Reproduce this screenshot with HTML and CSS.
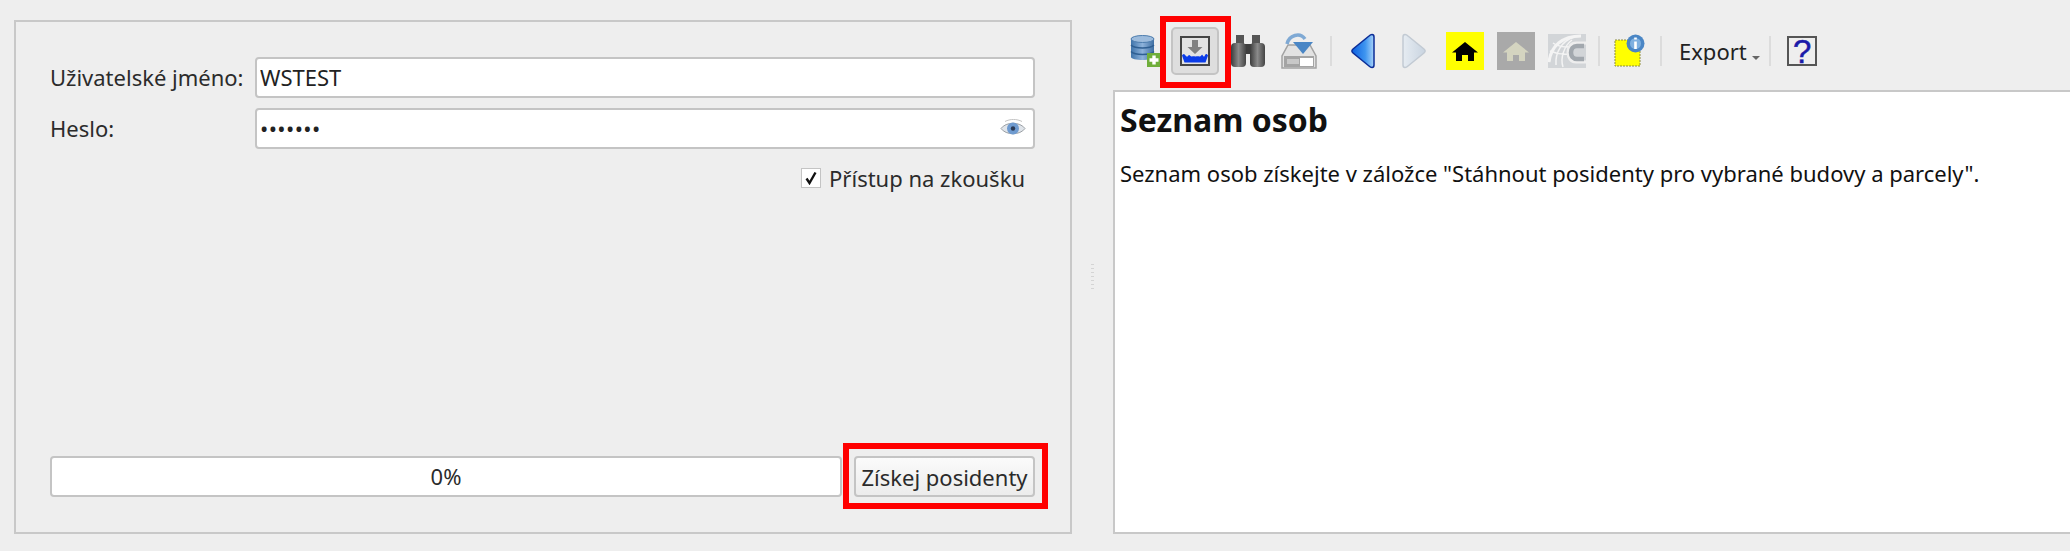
FILE: index.html
```html
<!doctype html>
<html lang="cs">

<head>
    <meta charset="utf-8">
    <title>Seznam osob</title>
    <link rel="stylesheet" href="styles.css">
</head>

<body>
    <div class="okno">
        <section class="panel">
            <div class="radek">
                <label class="popis">Uživatelské jméno:</label>
                <input class="pole" type="text" value="WSTEST">
            </div>
            <div class="radek">
                <label class="popis">Heslo:</label>
                <div class="heslo">
                    <input class="pole" type="password" value="1234567">
                    <svg class="oko" width="26" height="18" viewBox="0 0 26 18">
                        <path d="M1 9.500C6 2.500 20 2.500 25 9.500C20 16.500 6 16.500 1 9.500Z" fill="#dfe4ea" stroke="#9a9fa4"/>
                        <path d="M5 2.500C10 -.2 17 -.2 22 2.500" fill="none" stroke="#c4c4c4"/>
                        <circle cx="13" cy="9.500" r="6" fill="#6f9bd0"/>
                        <circle cx="13" cy="9.500" r="2.200" fill="#2b3a55"/>
                    </svg>
                </div>
            </div>
            <div class="zkouska">
                <span class="check">
                    <svg width="14" height="14" viewBox="0 0 14 14">
                        <path d="M2.500 7.500L5.500 12L11.500 1.500" fill="none" stroke="#111" stroke-width="2.400"/>
                    </svg>
                </span>
                <span>Přístup na zkoušku</span>
            </div>
            <div class="spodek">
                <div class="progress">0%</div>
                <div class="akce">
                    <button class="tlacitko">Získej posidenty</button>
                    <span class="ramecek"></span>
                </div>
            </div>
        </section>

        <div class="splitter"><span class="tecky"></span></div>

        <section class="prava">
            <div class="toolbar">
                <span class="tool">
                    <svg width="32" height="34" viewBox="0 0 32 34">
                        <defs>
                            <linearGradient id="db" x1="0" x2="1" y1="0" y2="0">
                                <stop offset="0" stop-color="#3f74ab"/>
                                <stop offset=".5" stop-color="#8db2da"/>
                                <stop offset="1" stop-color="#3f6fa3"/>
                            </linearGradient>
                        </defs>
                        <path d="M1 5C1 1 24 1 24 5V23C24 27 1 27 1 23Z" fill="url(#db)"/>
                        <ellipse cx="12.500" cy="5" rx="11.500" ry="3.500" fill="#9cbbdc" stroke="#4d7dae"/>
                        <path d="M1 11C5 15 20 15 24 11M1 17.500C5 21.500 20 21.500 24 17.500" fill="none" stroke="#2f5f92" stroke-width="1.500"/>
                        <rect x="17" y="19" width="14" height="14" fill="#6fae3a"/>
                        <path d="M24 21.500V30.500M19.500 26H28.500" stroke="#fff" stroke-width="3.400"/>
                    </svg>
                </span>
                <span class="tool aktivni">
                    <span class="tool-btn">
                        <svg width="30" height="30" viewBox="0 0 30 30">
                            <rect x="1" y="1" width="28" height="28" fill="#e2e2e2" stroke="#444" stroke-width="2"/>
                            <path d="M12 4H18V11H22.500L15 18L7.500 11H12Z" fill="#808080"/>
                            <path d="M2 19.500C3 17.500 4.500 17.500 5.500 19.500C6.500 21 7.500 21 8.500 19.500C9.500 18 10.500 21 12 20.500C13.500 20 14 20.500 15.500 20.500C17 20.500 18 20 19.500 20.500C21 21 21.500 18 22.500 19C23.500 21 24.500 21 25 19C26 17.500 27 17.500 28 19.500L25.500 26.500H4.500Z" fill="#0a3be8"/>
                        </svg>
                    </span>
                    <span class="ramecek"></span>
                </span>
                <span class="tool">
                    <svg width="36" height="34" viewBox="0 0 36 34">
                        <defs>
                            <linearGradient id="dal" x1="0" x2="1" y1="0" y2="0">
                                <stop offset="0" stop-color="#3c3c3c"/>
                                <stop offset=".5" stop-color="#8a8a8a"/>
                                <stop offset="1" stop-color="#444"/>
                            </linearGradient>
                        </defs>
                        <rect x="6" y="1" width="8" height="9" fill="#555"/>
                        <rect x="22" y="1" width="8" height="9" fill="#555"/>
                        <rect x="13" y="10" width="10" height="10" fill="#3e3e3e"/>
                        <rect x="1" y="9" width="15" height="24" rx="4" fill="url(#dal)"/>
                        <rect x="20" y="9" width="15" height="24" rx="4" fill="url(#dal)"/>
                    </svg>
                </span>
                <span class="tool">
                    <svg width="36" height="36" viewBox="0 0 36 36">
                        <path d="M7 12H29L35 23V35H1V23Z" fill="#e2e2e2" stroke="#a2a2a2" stroke-width="1.500"/>
                        <rect x="3" y="23" width="30" height="11" fill="#a4a4a4"/>
                        <rect x="6" y="26" width="12" height="5" fill="#c8c8c8"/>
                        <rect x="19" y="25" width="13" height="8" fill="#fff"/>
                        <path d="M6 11C8 2 19 -1 24 6" fill="none" stroke="#7fa9d4" stroke-width="3.500"/>
                        <path d="M12 9H32L22 21Z" fill="#4a86c5"/>
                    </svg>
                </span>
                <span class="oddelovac"></span>
                <span class="tool">
                    <svg width="24" height="36" viewBox="0 0 24 36">
                        <defs>
                            <linearGradient id="vlevo" x1="0" x2="1" y1="0" y2="0">
                                <stop offset="0" stop-color="#0c5fe0"/>
                                <stop offset=".6" stop-color="#3e95f0"/>
                                <stop offset="1" stop-color="#a9d3f8"/>
                            </linearGradient>
                        </defs>
                        <path d="M21 1.500C22.500 1.500 23 2.500 23 4V32C23 33.500 22.500 34.500 21 34.500C20 34.500 19 34 18 33L2 20C.5 18.800 .5 17.200 2 16L18 3C19 2 20 1.500 21 1.500Z" fill="url(#vlevo)" stroke="#0b2c96" stroke-width="1.500"/>
                    </svg>
                </span>
                <span class="tool">
                    <svg width="24" height="36" viewBox="0 0 24 36">
                        <defs>
                            <linearGradient id="vpravo" x1="0" x2="1" y1="0" y2="0">
                                <stop offset="0" stop-color="#e6ecf2"/>
                                <stop offset="1" stop-color="#c9d4e0"/>
                            </linearGradient>
                        </defs>
                        <path d="M3 1.500C1.500 1.500 1 2.500 1 4V32C1 33.500 1.500 34.500 3 34.500C4 34.500 5 34 6 33L22 20C23.500 18.800 23.500 17.200 22 16L6 3C5 2 4 1.500 3 1.500Z" fill="url(#vpravo)" stroke="#c2cad3" stroke-width="1.500"/>
                    </svg>
                </span>
                <span class="tool">
                    <svg width="38" height="38" viewBox="0 0 38 38">
                        <rect width="38" height="38" fill="#ffff00"/>
                        <path d="M19 10L32 20.500H28V29H22V23H16V29H10V20.500H6Z" fill="#000"/>
                    </svg>
                </span>
                <span class="tool">
                    <svg width="38" height="38" viewBox="0 0 38 38">
                        <rect width="38" height="38" fill="#a9a9a9"/>
                        <path d="M19 10L32 20.500H28V29H22V23H16V29H10V20.500H6Z" fill="#d4d4c0"/>
                    </svg>
                </span>
                <span class="tool">
                    <svg width="38" height="34" viewBox="0 0 38 34">
                        <rect width="38" height="34" fill="#d2d5d8"/>
                        <path d="M1 28C3 12 14 2 33 2" fill="none" stroke="#f4f4f4" stroke-width="3"/>
                        <path d="M8 31C7 18 14 7 26 3M15 33C12 24 16 12 24 6M2 17C9 20 15 21 22 20M5 9C11 13 17 14 25 12" fill="none" stroke="#f4f4f4" stroke-width="1.500"/>
                        <path d="M38 9H28C23 9 20 13 20 18C20 24 23 28 28 28H38" fill="none" stroke="#eeeeee" stroke-width="3"/>
                        <path d="M36 12H29C25 12 23 15 23 18.500C23 22 25 25 29 25H36" fill="none" stroke="#a2a8ae" stroke-width="4.500"/>
                    </svg>
                </span>
                <span class="oddelovac"></span>
                <span class="tool uzky">
                    <svg width="32" height="34" viewBox="0 0 32 34">
                        <rect x="1" y="6" width="25" height="26" fill="#ffff00" stroke="#8d8d3c" stroke-dasharray="2 1"/>
                        <circle cx="21.500" cy="9.500" r="9" fill="#4a86c5"/>
                        <circle cx="21.500" cy="9.500" r="5.500" fill="#7fb0e0"/>
                        <path d="M21.500 3.500V5.500M21.500 7.500V15" stroke="#fff" stroke-width="2.600"/>
                    </svg>
                </span>
                <span class="oddelovac"></span>
                <span class="export">Export<span class="sipka"></span></span>
                <span class="oddelovac"></span>
                <span class="tool">
                    <span class="napoveda">?</span>
                </span>
            </div>
            <div class="obsah">
                <h1>Seznam osob</h1>
                <p>Seznam osob získejte v záložce "Stáhnout posidenty pro vybrané budovy a parcely".</p>
            </div>
        </section>
    </div>
</body>

</html>
```

FILE: styles.css
```css
html,
body {
    margin: 0;
    padding: 0;
    height: 100%;
    overflow: hidden;
}

body {
    font-family: "Noto Sans", sans-serif;
    font-size: 22px;
    color: #2b2b2b;
    background-color: #eeeeee;
}

.okno {
    display: flex;
    height: 551px;
    box-sizing: border-box;
    padding: 0 0 17px 14px;
}

.panel {
    display: flex;
    flex-direction: column;
    gap: 10px;
    width: 1058px;
    margin-top: 20px;
    box-sizing: border-box;
    padding: 35px 35px 35px 34px;
    border: 2px solid #c8c8c8;
}

.radek {
    display: flex;
    align-items: center;
}

.popis {
    flex: 0 0 205px;
    padding-bottom: 2px;
    white-space: nowrap;
}

.pole {
    display: block;
    width: 100%;
    height: 41px;
    box-sizing: border-box;
    padding: 0 3px 2px;
    font: inherit;
    color: #222;
    background: #fff;
    border: 2px solid #c4c4c4;
    border-radius: 4px;
    outline: none;
}

.pole[type="password"] {
    letter-spacing: .4px;
}

.heslo {
    position: relative;
    flex: 1;
}

.oko {
    position: absolute;
    top: 11px;
    right: 9px;
}

.zkouska {
    display: flex;
    align-items: center;
    justify-content: flex-end;
    gap: 8px;
    margin-top: 4px;
    padding-right: 10px;
}

.check {
    display: flex;
    align-items: center;
    justify-content: center;
    width: 20px;
    height: 20px;
    box-sizing: border-box;
    background: #fff;
    border: 1px solid #c4c4c4;
}

.spodek {
    display: flex;
    gap: 12px;
    margin-top: auto;
}

.progress {
    flex: 1;
    height: 41px;
    box-sizing: border-box;
    line-height: 37px;
    text-align: center;
    background: #fff;
    border: 2px solid #c4c4c4;
    border-radius: 4px;
}

.akce {
    position: relative;
}

.tlacitko {
    display: block;
    width: 181px;
    height: 41px;
    padding: 0;
    font: inherit;
    color: #2b2b2b;
    background: linear-gradient(#fbfbfb, #ececec);
    border: 2px solid #c4c4c4;
    border-radius: 4px;
}

.ramecek {
    position: absolute;
    top: -13px;
    right: -13px;
    bottom: -12px;
    left: -11px;
    border: 6px solid #ff0000;
}

.splitter {
    display: flex;
    flex: 0 0 41px;
    align-items: center;
    justify-content: center;
    padding-top: 20px;
}

.tecky {
    width: 3px;
    height: 26px;
    background: repeating-linear-gradient(#d4d4d4 0 1px, transparent 1px 4px);
}

.prava {
    display: flex;
    flex: 1;
    flex-direction: column;
    min-width: 0;
}

.toolbar {
    display: flex;
    align-items: center;
    height: 90px;
    padding: 12px 0 0 7px;
    box-sizing: border-box;
}

.tool {
    position: relative;
    display: flex;
    flex: 0 0 51px;
    align-items: center;
    justify-content: center;
}

.uzky {
    flex-basis: 49px;
}

.aktivni {
    justify-content: flex-start;
}

.tool-btn {
    display: flex;
    align-items: center;
    justify-content: center;
    width: 48px;
    height: 48px;
    box-sizing: border-box;
    background: #dedede;
    border: 2px solid #c4c4c4;
    border-radius: 5px;
}

.aktivni .ramecek {
    top: -11px;
    right: -9px;
    bottom: -13px;
    left: -11px;
}

.oddelovac {
    flex: 0 0 13px;
    height: 30px;
    background: linear-gradient(#dcdcdc, #dcdcdc) center / 2px 100% no-repeat;
}

.export {
    display: flex;
    align-items: center;
    padding: 0 4px 0 12px;
    color: #222;
}

.sipka {
    width: 0;
    height: 0;
    margin: 14px 0 0 5px;
    border-top: 4px solid #666;
    border-right: 4px solid transparent;
    border-left: 4px solid transparent;
}

.napoveda {
    width: 30px;
    height: 30px;
    box-sizing: border-box;
    font-family: "Liberation Sans", sans-serif;
    font-size: 33px;
    line-height: 27px;
    text-align: center;
    color: #1a1aa8;
    -webkit-text-stroke: .5px #1a1aa8;
    border: 2px solid #555;
}

.obsah {
    flex: 1;
    box-sizing: border-box;
    padding: 6px 5px;
    color: #111;
    background: #fff;
    border: 2px solid #c8c8c8;
    border-right: 0;
}

h1 {
    margin: 0 0 17px;
    font-size: 32px;
    font-weight: bold;
}

p {
    margin: 0;
    white-space: nowrap;
}
```
